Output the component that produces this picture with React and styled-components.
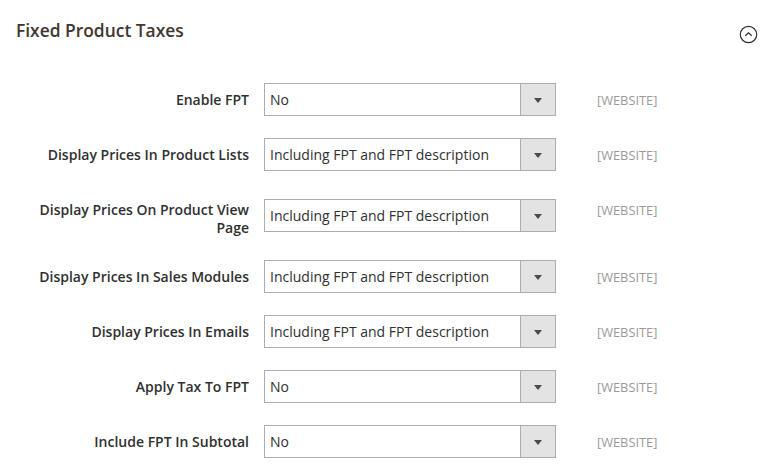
import styled, { createGlobalStyle } from 'styled-components'

const GlobalStyle = createGlobalStyle`
  body {
    margin: 0;
    background: #fff;
    font-family: 'Open Sans', 'Liberation Sans', sans-serif;
    color: #303030;
  }
`

const Section = styled.div`
  width: 775px;
`

const Header = styled.div`
  display: flex;
  align-items: center;
  justify-content: space-between;
  padding: 19px 16px 0 16px;
  height: 23px;
  margin-bottom: 41px;
`

const Title = styled.h2`
  margin: 0;
  font-size: 17.4px;
  line-height: 23px;
  font-weight: 600;
  color: #41362f;
`

const Toggle = styled.span`
  display: flex;
  margin-top: 8px;
  margin-right: 1px;
`

const Fields = styled.div`
  display: flex;
  flex-direction: column;
  gap: 22px;
`

const Row = styled.div`
  display: grid;
  grid-template-columns: 220px 292px auto;
  column-gap: 15px;
  align-items: start;
  padding-left: 29px;
`

const Label = styled.label`
  padding: 8px 0 1px 0;
  text-align: right;
  font-size: 14px;
  line-height: 18px;
  font-weight: 600;
  color: #303030;
`

const Select = styled.div`
  align-self: center;
  display: flex;
  height: 33px;
  box-sizing: border-box;
  border: 1px solid #adadad;
  background: #fff;
`

const Value = styled.span`
  flex: 1;
  padding-left: 5px;
  font-size: 14px;
  line-height: 31px;
  color: #303030;
`

const Arrow = styled.span`
  width: 34px;
  border-left: 1px solid #adadad;
  background: #e3e3e3;
  display: flex;
  align-items: center;
  justify-content: center;

  &::after {
    content: '';
    border-left: 4px solid transparent;
    border-right: 4px solid transparent;
    border-top: 5px solid #514943;
    margin-top: 1px;
  }
`

const Scope = styled.span`
  padding-top: 8px;
  padding-left: 26px;
  font-size: 12.8px;
  line-height: 18px;
  color: #9a9a9a;
`

const fields = [
  { label: 'Enable FPT', value: 'No' },
  { label: 'Display Prices In Product Lists', value: 'Including FPT and FPT description' },
  { label: 'Display Prices On Product View Page', value: 'Including FPT and FPT description' },
  { label: 'Display Prices In Sales Modules', value: 'Including FPT and FPT description' },
  { label: 'Display Prices In Emails', value: 'Including FPT and FPT description' },
  { label: 'Apply Tax To FPT', value: 'No' },
  { label: 'Include FPT In Subtotal', value: 'No' },
]

const CollapseIcon = () => (
  <svg width='19' height='19' viewBox='0 0 19 19'>
    <circle cx='9.5' cy='9.5' r='8.2' fill='none' stroke='#303030' strokeWidth='1.2' />
    <path d='M6.3 10.8 L9.5 7.8 L12.7 10.8' fill='none' stroke='#303030' strokeWidth='1.2' />
  </svg>
)

const App = () => {
  return (
    <Section>
      <GlobalStyle />
      <Header>
        <Title>Fixed Product Taxes</Title>
        <Toggle>
          <CollapseIcon />
        </Toggle>
      </Header>

      <Fields>
        {fields.map((f) => (
          <Row key={f.label}>
            <Label>{f.label}</Label>
            <Select>
              <Value>{f.value}</Value>
              <Arrow />
            </Select>
            <Scope>[WEBSITE]</Scope>
          </Row>
        ))}
      </Fields>
    </Section>
  )
}

export default App
